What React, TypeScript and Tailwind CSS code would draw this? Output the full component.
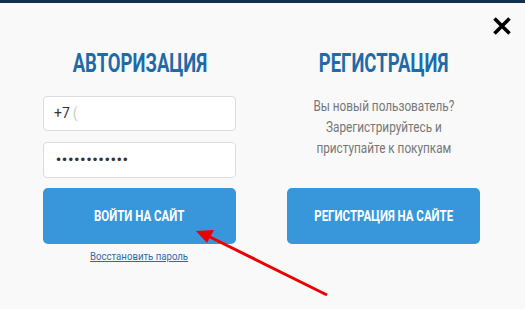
import React from "react";

const narrow = { fontFamily: 'Roboto, "DejaVu Sans", sans-serif' };

export default function App() {
  return (
    <div className="w-[525px] h-[309px] bg-[#f9f9f9] relative overflow-hidden" style={narrow}>
      <div className="h-[3px] bg-[#12304a]" />
      <button className="absolute right-[13px] top-[16px] w-[20px] h-[20px]">
        <svg viewBox="0 0 20 20" width="20" height="20">
          <path d="M2.5 2.5 L17.5 17.5 M17.5 2.5 L2.5 17.5" stroke="#000" strokeWidth="3.6" strokeLinecap="butt" />
        </svg>
      </button>
      <div className="flex pt-[46px] pl-[43px] gap-[51px]">
        <div className="w-[193px] flex flex-col items-center">
          <h2 className="h-[30px] text-[25px] leading-[30px] font-bold text-[#1f6aa8] whitespace-nowrap">
            <span className="inline-block scale-x-[0.74]">АВТОРИЗАЦИЯ</span>
          </h2>
          <div className="mt-[17px] w-full h-[35px] bg-white border border-[#dcdcdc] rounded-[4px] flex items-center pl-[10px] text-[14px] text-[#333]">
            +7 <span className="text-[#ccc] ml-[3px]">(</span>
          </div>
          <div className="mt-[11px] w-full h-[36px] bg-white border border-[#dcdcdc] rounded-[4px] flex items-center pl-[11px] text-[12px] text-[#333] tracking-[-1px] font-['DejaVu_Sans']">
            ••••••••••••
          </div>
          <button className="mt-[10px] w-full h-[56px] bg-[#3897da] rounded-[5px] text-white font-bold text-[14px] whitespace-nowrap">
            <span className="inline-block scale-x-[0.82]">ВОЙТИ НА САЙТ</span>
          </button>
          <a className="mt-[6px] text-[11px] leading-[14px] text-[#2a6cb4] underline whitespace-nowrap inline-block scale-x-[0.875]">Восстановить пароль</a>
        </div>
        <div className="w-[193px] flex flex-col items-center">
          <h2 className="h-[30px] text-[25px] leading-[30px] font-bold text-[#1f6aa8] whitespace-nowrap">
            <span className="inline-block scale-x-[0.74]">РЕГИСТРАЦИЯ</span>
          </h2>
          <p className="mt-[17px] h-[63px] text-[14px] leading-[21px] text-[#777] text-center whitespace-nowrap scale-x-[0.84]">
            Вы новый пользователь?<br />Зарегистрируйтесь и<br />приступайте к покупкам
          </p>
          <button className="mt-[29px] w-full h-[56px] bg-[#3897da] rounded-[5px] text-white font-bold text-[14px] whitespace-nowrap">
            <span className="inline-block scale-x-[0.82]">РЕГИСТРАЦИЯ НА САЙТЕ</span>
          </button>
        </div>
      </div>
      <svg className="absolute left-0 top-0 pointer-events-none" width="525" height="309">
        <line x1="327" y1="295" x2="208" y2="236" stroke="#ee0000" strokeWidth="3" />
        <polygon points="196,231 214,230 207,243" fill="#ee0000" />
      </svg>
    </div>
  );
}
